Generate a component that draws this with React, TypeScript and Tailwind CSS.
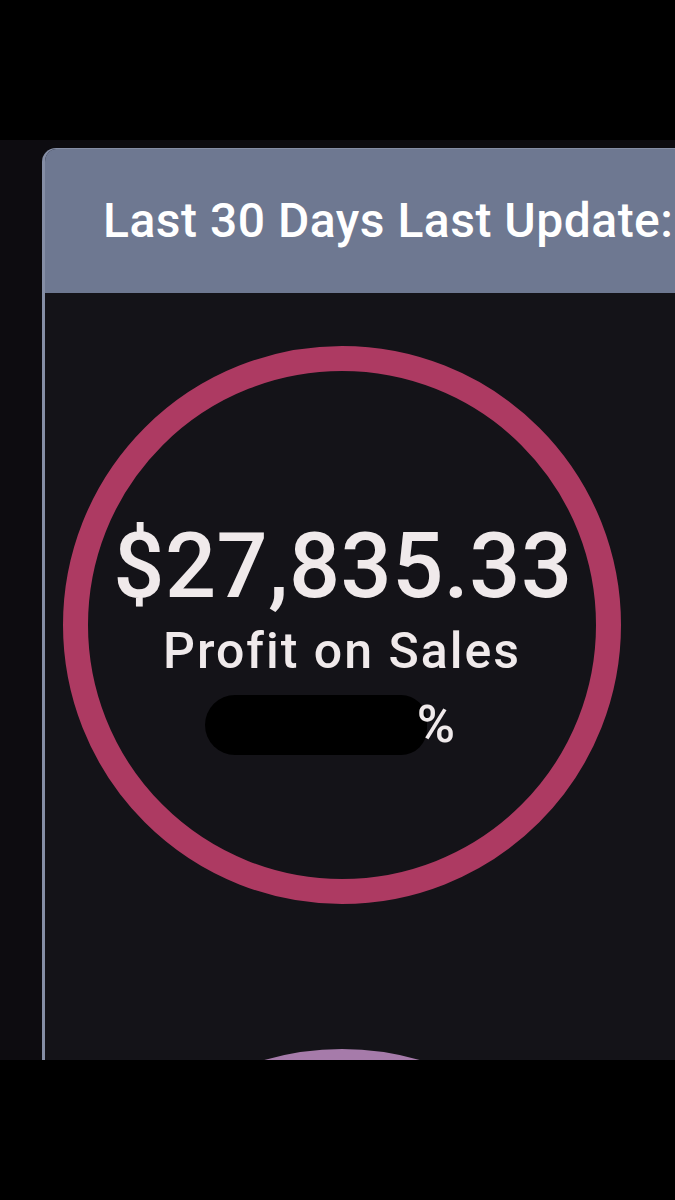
export default function App() {
  return (
    <div className="w-[675px] h-[1200px] bg-black flex flex-col overflow-hidden" style={{ fontFamily: "Roboto, 'Noto Sans', sans-serif" }}>
      <div className="h-[140px] shrink-0 bg-black" />

      <div className="h-[920px] shrink-0 bg-[#0d0c10] overflow-hidden pl-[42px] pt-[8px]">
        <div className="w-[700px] h-[960px] rounded-tl-[14px] border-l-[3px] border-t border-[#858ea5] bg-[#141318] overflow-hidden">
          <div className="h-[144px] bg-[#6e7891] flex items-center pl-[58px]">
            <span className="text-[48px] leading-none font-medium tracking-[0.5px] text-white whitespace-nowrap">
              Last 30 Days Last Update:
            </span>
          </div>

          <div className="flex flex-col pt-[53px] pl-[18px] gap-[145px]">
            <div className="w-[558px] h-[558px] rounded-full border-[25px] border-[#ad3a62] flex flex-col items-center pt-[151px] text-[#f0eaeb]">
              <div className="text-[90px] leading-none font-medium tracking-[0.5px] ml-[2px]">$27,835.33</div>
              <div className="text-[50px] leading-none font-medium tracking-[2px] mt-[14px]">Profit on Sales</div>
              <div className="flex items-center mt-[19px] mr-[24px]">
                <span className="w-[222px] h-[60px] rounded-l-[30px] rounded-r-[26px] bg-black" />
                <span className="text-[52px] leading-none font-medium -ml-[10px]">%</span>
              </div>
            </div>

            <div className="w-[558px] h-[558px] rounded-full border-[25px] border-[#a67baa]" />
          </div>
        </div>
      </div>

      <div className="flex-1 bg-black" />
    </div>
  );
}
